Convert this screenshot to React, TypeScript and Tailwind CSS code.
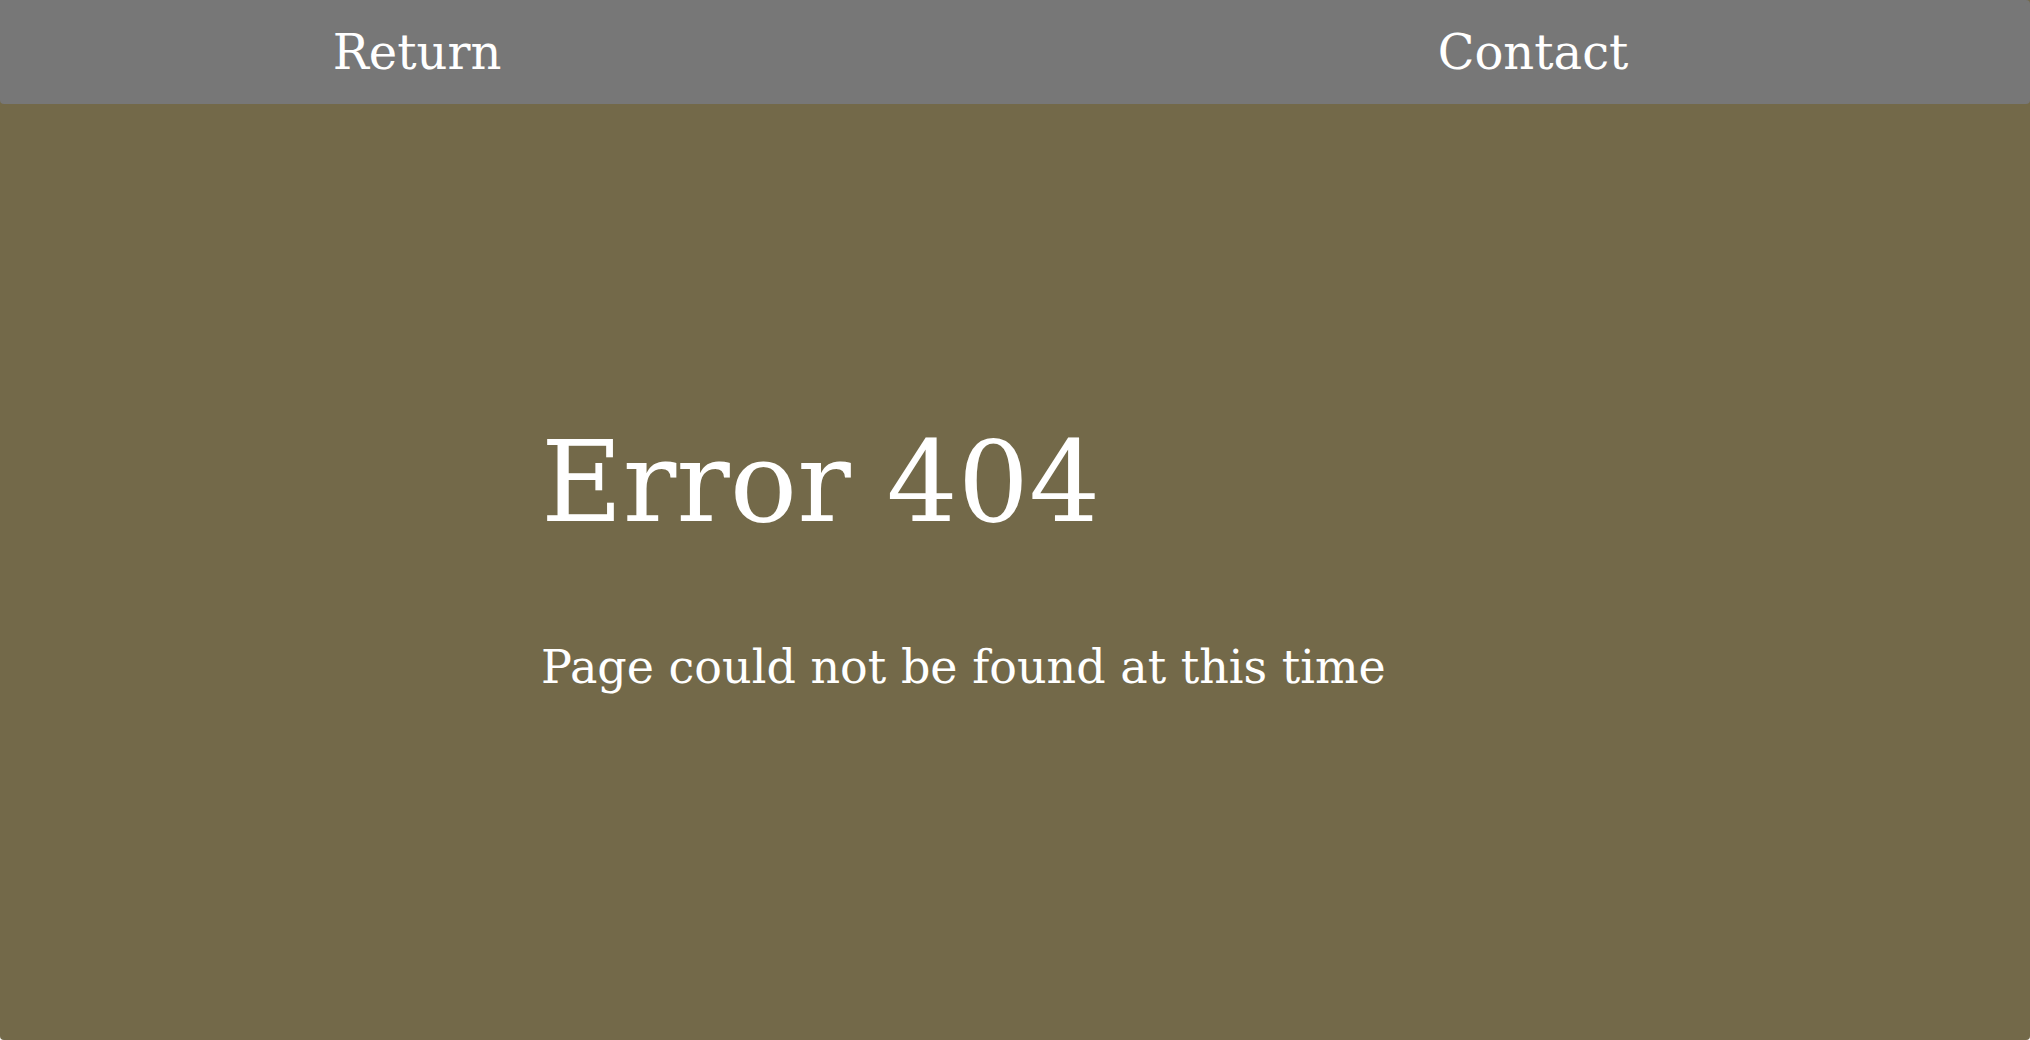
export default function App() {
  return (
    <div
      className="h-screen w-full bg-white"
      style={{ fontFamily: '"DejaVu Serif", "Liberation Serif", serif' }}
    >
      <div className="flex h-full flex-col rounded-b-[4px] bg-[#736949]">
        {/* top nav */}
        <nav className="flex h-[104px] shrink-0 items-center rounded-tr-[4px] rounded-b-[4px] bg-[#777777] text-white">
          <a href="#" className="w-[834px] text-center text-[48px] leading-none">
            Return
          </a>
          <a href="#" className="ml-[202px] flex-1 text-center text-[48px] leading-none">
            Contact
          </a>
        </nav>

        {/* body */}
        <main className="flex-1 pl-[541px] pt-[322px] text-white">
          <h1 className="text-[112px] leading-none font-normal">Error 404</h1>
          <p className="mt-[106px] text-[46px] leading-none">Page could not be found at this time</p>
        </main>
      </div>
    </div>
  );
}
